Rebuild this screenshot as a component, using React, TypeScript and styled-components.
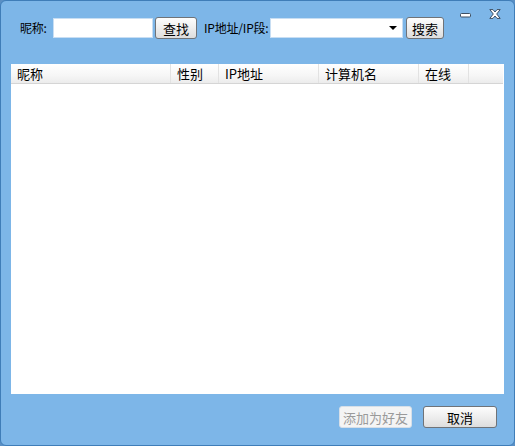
import styled, { createGlobalStyle } from "styled-components";

const GlobalStyle = createGlobalStyle`
  html, body {
    margin: 0;
    padding: 0;
    background: #5a8fc4;
  }
  body {
    font-family: "Noto Sans CJK SC", "DejaVu Sans", sans-serif;
    font-size: 12px;
    color: #000;
  }
`;

const Window = styled.div`
  position: relative;
  box-sizing: border-box;
  width: 515px;
  height: 446px;
  background: #7db6e8;
  border: 1px solid #3f7db8;
  border-radius: 6px;
  display: flex;
  flex-direction: column;
  overflow: hidden;
`;

const Caption = styled.div`
  position: absolute;
  top: 8px;
  right: 13px;
  display: flex;
  align-items: flex-end;
  gap: 18px;
`;

const Toolbar = styled.div`
  display: flex;
  align-items: center;
  padding: 16px 0 0 19px;
  height: 22px;
`;

const Label = styled.span<{ $width: number; $gap?: number }>`
  width: ${(p) => p.$width}px;
  margin-left: ${(p) => p.$gap ?? 0}px;
  white-space: nowrap;
  line-height: 22px;
  letter-spacing: -0.2px;
`;

const TextInput = styled.div<{ $width: number }>`
  box-sizing: border-box;
  width: ${(p) => p.$width}px;
  height: 20px;
  background: #fff;
  border: 1px solid #c8def3;
  display: flex;
  align-items: center;
  justify-content: flex-end;
  padding-right: 5px;
`;

const Button = styled.div<{ $width: number; $gap?: number; $disabled?: boolean }>`
  box-sizing: border-box;
  width: ${(p) => p.$width}px;
  height: 22px;
  margin-left: ${(p) => p.$gap ?? 0}px;
  display: flex;
  align-items: center;
  justify-content: center;
  border-radius: 3px;
  font-size: 13px;
  color: ${(p) => (p.$disabled ? "#9a9a9a" : "#000")};
  border: 1px solid ${(p) => (p.$disabled ? "#d6dfe8" : "#6f7378")};
  background: ${(p) =>
    p.$disabled
      ? "#f4f4f4"
      : "linear-gradient(to bottom, #fdfdfd 0%, #eeeeee 50%, #dddddd 100%)"};
`;

const Arrow = styled.div`
  width: 0;
  height: 0;
  border-left: 4px solid transparent;
  border-right: 4px solid transparent;
  border-top: 4px solid #000;
`;

const Table = styled.div`
  margin: 25px 0 0 10px;
  width: 493px;
  height: 330px;
  background: #fff;
  display: flex;
  flex-direction: column;
`;

const HeaderRow = styled.div`
  display: flex;
  height: 20px;
  box-sizing: border-box;
  background: linear-gradient(to bottom, #ffffff 0%, #f6f6f6 60%, #ececec 100%);
  border-bottom: 1px solid #d5d5d5;
  margin-right: 1px;
`;

const HeaderCell = styled.div<{ $width?: number }>`
  box-sizing: border-box;
  ${(p) => (p.$width ? `width: ${p.$width}px;` : "flex: 1;")}
  padding-left: 6px;
  line-height: 19px;
  font-size: 13px;
  border-right: ${(p) => (p.$width ? "1px solid #e2e2e2" : "none")};
`;

const Footer = styled.div`
  display: flex;
  justify-content: flex-end;
  padding: 12px 17px 0 0;
  gap: 11px;
`;

const columns = [
  { title: "昵称", width: 160 },
  { title: "性别", width: 48 },
  { title: "IP地址", width: 100 },
  { title: "计算机名", width: 100 },
  { title: "在线", width: 50 },
];

const App = () => {
  return (
    <>
      <GlobalStyle />
      <Window>
        <Caption>
          <svg width="11" height="5" viewBox="0 0 11 5" style={{ marginBottom: 1 }}>
            <rect x="0.5" y="0.5" width="10" height="3.5" rx="1" fill="#fff" stroke="#3d4f63" />
          </svg>
          <svg width="12" height="10" viewBox="0 0 12 10">
            <path
              d="M0.8 0.6 L4 0.6 L6 3 L8 0.6 L11.2 0.6 L7.7 5 L11.2 9.4 L8 9.4 L6 7 L4 9.4 L0.8 9.4 L4.3 5 Z"
              fill="#fff"
              stroke="#3d4f63"
              strokeWidth="1"
              strokeLinejoin="round"
            />
          </svg>
        </Caption>

        <Toolbar>
          <Label $width={33}>昵称:</Label>
          <TextInput $width={100} />
          <Button $width={42} $gap={2}>查找</Button>
          <Label $width={66} $gap={7}>IP地址/IP段:</Label>
          <TextInput $width={133}>
            <Arrow />
          </TextInput>
          <Button $width={38} $gap={3}>搜索</Button>
        </Toolbar>

        <Table>
          <HeaderRow>
            {columns.map((c) => (
              <HeaderCell key={c.title} $width={c.width}>
                {c.title}
              </HeaderCell>
            ))}
            <HeaderCell />
          </HeaderRow>
        </Table>

        <Footer>
          <Button $width={73} $disabled>添加为好友</Button>
          <Button $width={74}>取消</Button>
        </Footer>
      </Window>
    </>
  );
};

export default App;
